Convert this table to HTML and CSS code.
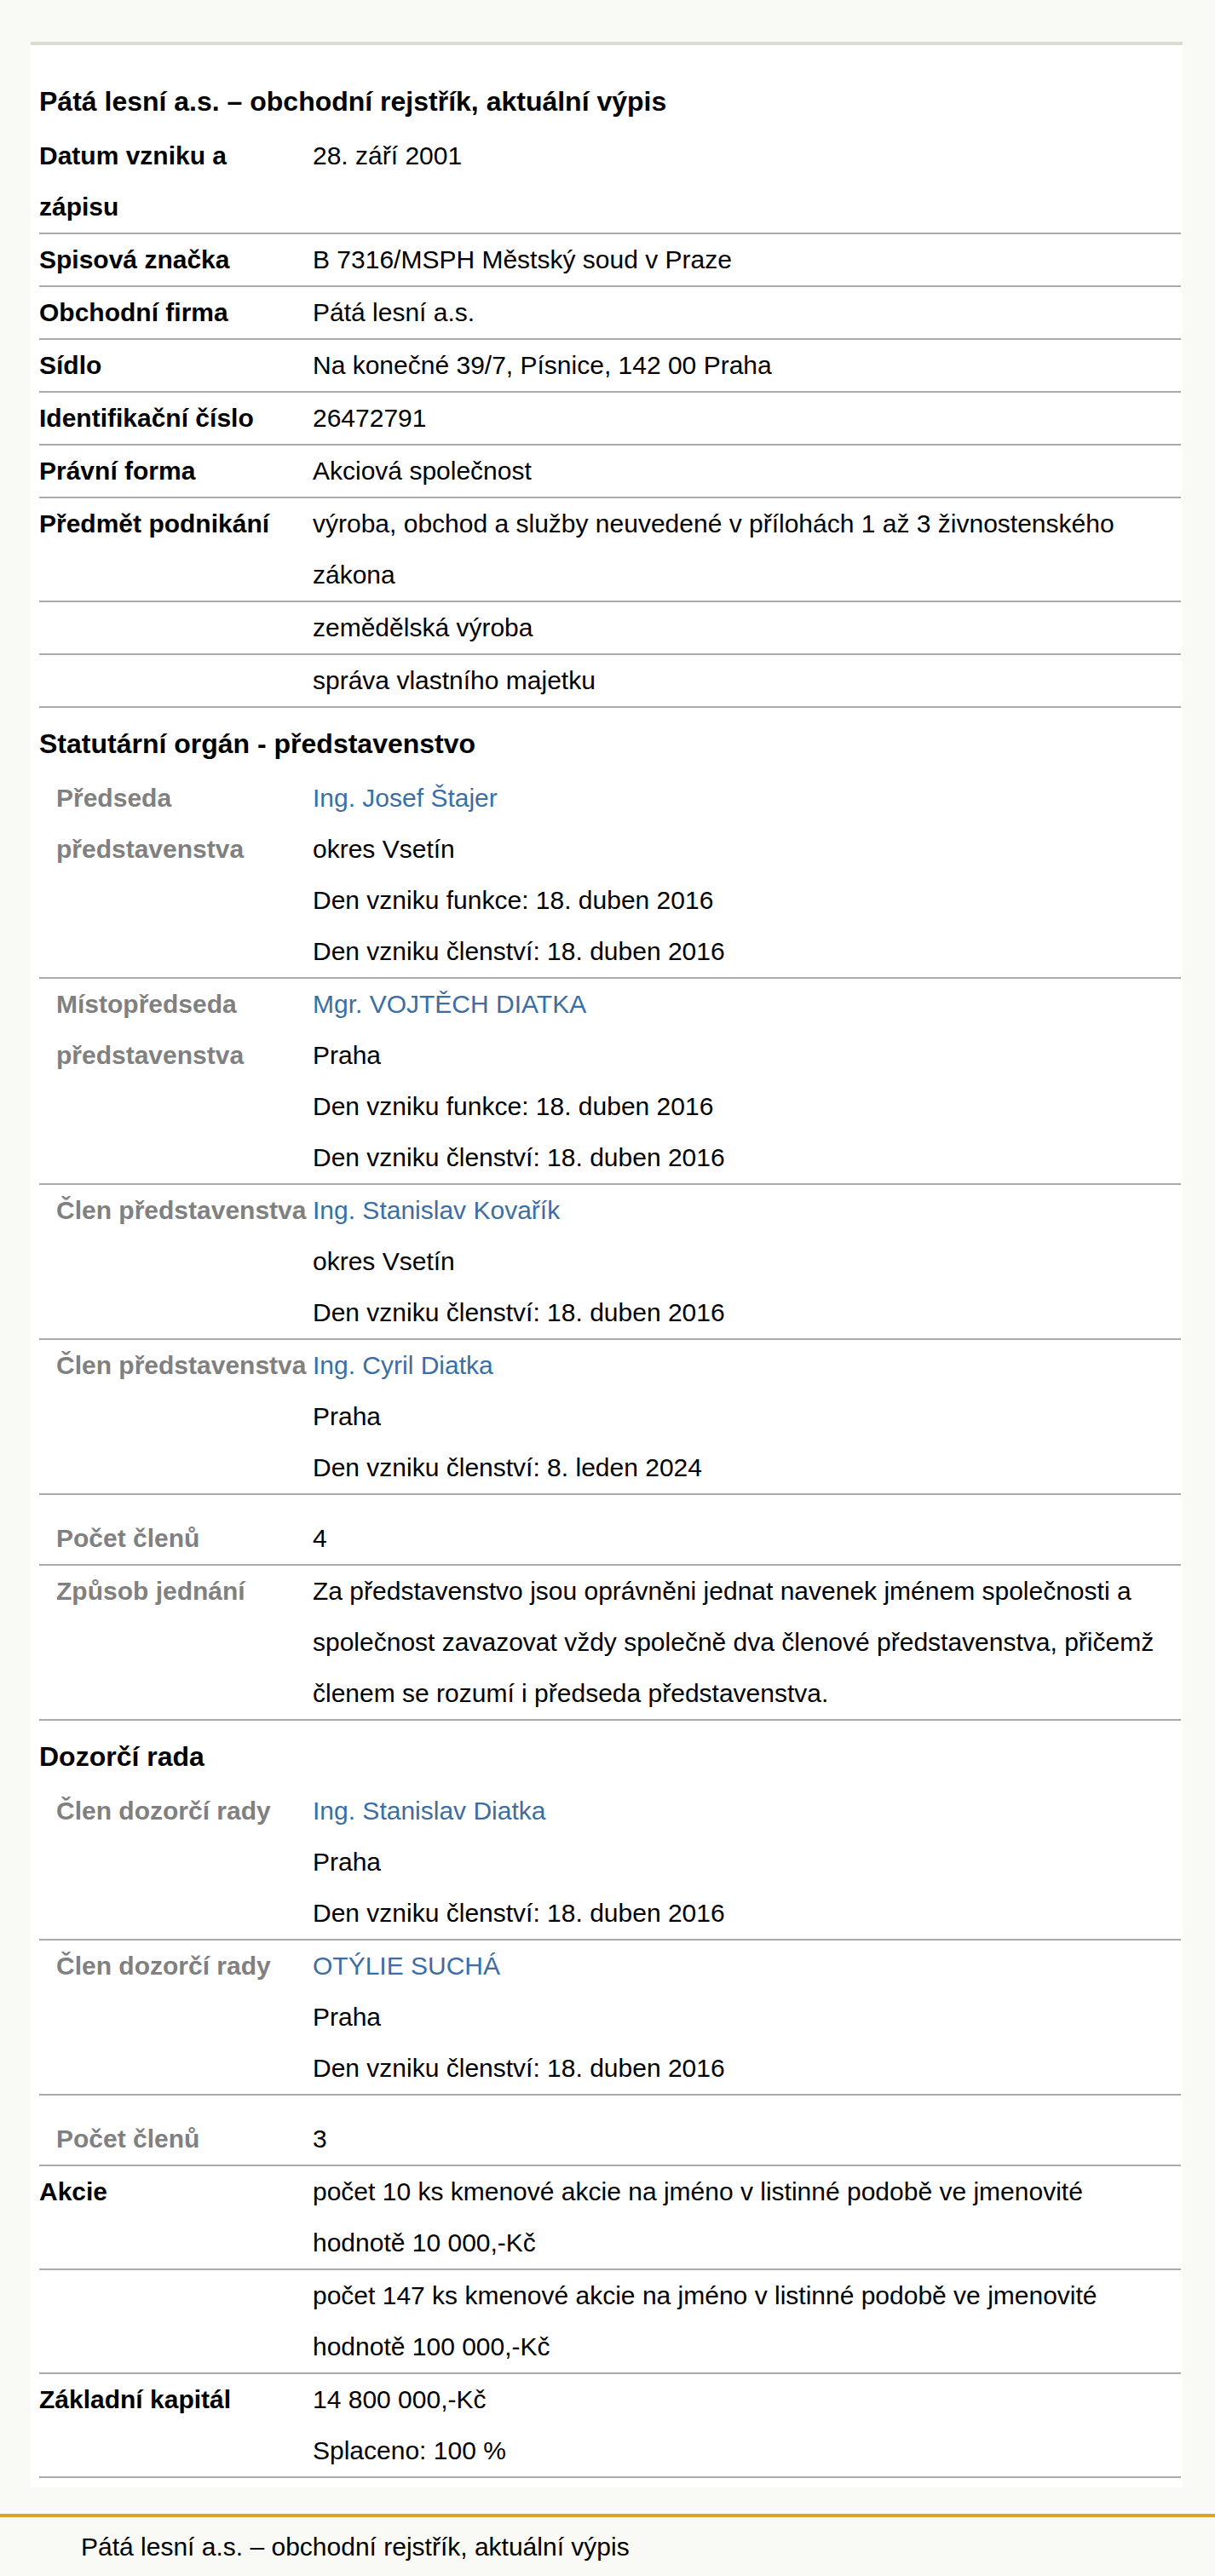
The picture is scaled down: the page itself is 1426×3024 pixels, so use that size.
FILE: index.html
```html
<!DOCTYPE html>
<html lang="cs">
<head>
  <meta charset="UTF-8" />
  <title>Pátá lesní a.s. – obchodní rejstřík, aktuální výpis</title>
  <meta name="viewport" content="width=device-width, initial-scale=1.0" />
  <link rel="stylesheet" href="styles.css">
</head>
<body>

  <div class="card">
    <h1 class="section-title">Pátá lesní a.s. – obchodní rejstřík, aktuální výpis</h1>

    <div class="row">
      <div class="label">Datum vzniku a zápisu</div>
      <div class="value">28. září 2001</div>
    </div>
    <div class="row">
      <div class="label">Spisová značka</div>
      <div class="value">B 7316/MSPH Městský soud v Praze</div>
    </div>
    <div class="row">
      <div class="label">Obchodní firma</div>
      <div class="value">Pátá lesní a.s.</div>
    </div>
    <div class="row">
      <div class="label">Sídlo</div>
      <div class="value">Na konečné 39/7, Písnice, 142 00 Praha</div>
    </div>
    <div class="row">
      <div class="label">Identifikační číslo</div>
      <div class="value">26472791</div>
    </div>
    <div class="row">
      <div class="label">Právní forma</div>
      <div class="value">Akciová společnost</div>
    </div>
    <div class="row">
      <div class="label">Předmět podnikání</div>
      <div class="value">výroba, obchod a služby neuvedené v přílohách 1 až 3 živnostenského zákona</div>
    </div>
    <div class="row">
      <div class="label"></div>
      <div class="value">zemědělská výroba</div>
    </div>
    <div class="row">
      <div class="label"></div>
      <div class="value">správa vlastního majetku</div>
    </div>

    <h2 class="section-title">Statutární orgán - představenstvo</h2>

    <div class="row">
      <div class="label sub">Předseda představenstva</div>
      <div class="value">
        <a href="#">Ing. Josef Štajer</a>
        <div>okres Vsetín</div>
        <div>Den vzniku funkce: 18. duben 2016</div>
        <div>Den vzniku členství: 18. duben 2016</div>
      </div>
    </div>
    <div class="row">
      <div class="label sub">Místopředseda představenstva</div>
      <div class="value">
        <a href="#">Mgr. VOJTĚCH DIATKA</a>
        <div>Praha</div>
        <div>Den vzniku funkce: 18. duben 2016</div>
        <div>Den vzniku členství: 18. duben 2016</div>
      </div>
    </div>
    <div class="row">
      <div class="label sub">Člen představenstva</div>
      <div class="value">
        <a href="#">Ing. Stanislav Kovařík</a>
        <div>okres Vsetín</div>
        <div>Den vzniku členství: 18. duben 2016</div>
      </div>
    </div>
    <div class="row">
      <div class="label sub">Člen představenstva</div>
      <div class="value">
        <a href="#">Ing. Cyril Diatka</a>
        <div>Praha</div>
        <div>Den vzniku členství: 8. leden 2024</div>
      </div>
    </div>
    <div class="row summary">
      <div class="label sub">Počet členů</div>
      <div class="value">4</div>
    </div>
    <div class="row">
      <div class="label sub">Způsob jednání</div>
      <div class="value">Za představenstvo jsou oprávněni jednat navenek jménem společnosti a společnost zavazovat vždy společně dva členové představenstva, přičemž členem se rozumí i předseda představenstva.</div>
    </div>

    <h2 class="section-title">Dozorčí rada</h2>

    <div class="row">
      <div class="label sub">Člen dozorčí rady</div>
      <div class="value">
        <a href="#">Ing. Stanislav Diatka</a>
        <div>Praha</div>
        <div>Den vzniku členství: 18. duben 2016</div>
      </div>
    </div>
    <div class="row">
      <div class="label sub">Člen dozorčí rady</div>
      <div class="value">
        <a href="#">OTÝLIE SUCHÁ</a>
        <div>Praha</div>
        <div>Den vzniku členství: 18. duben 2016</div>
      </div>
    </div>
    <div class="row summary">
      <div class="label sub">Počet členů</div>
      <div class="value">3</div>
    </div>

    <div class="row">
      <div class="label">Akcie</div>
      <div class="value">počet 10 ks kmenové akcie na jméno v listinné podobě ve jmenovité hodnotě 10 000,-Kč</div>
    </div>
    <div class="row">
      <div class="label"></div>
      <div class="value">počet 147 ks kmenové akcie na jméno v listinné podobě ve jmenovité hodnotě 100 000,-Kč</div>
    </div>
    <div class="row">
      <div class="label">Základní kapitál</div>
      <div class="value">
        <div>14 800 000,-Kč</div>
        <div>Splaceno: 100 %</div>
      </div>
    </div>
  </div>

  <footer class="footer">Pátá lesní a.s. – obchodní rejstřík, aktuální výpis</footer>

</body>
</html>
```

FILE: styles.css
```css
body {
  margin: 0;
  padding: 0;
  background: #f9faf5;
  color: #000;
  font-family: "Liberation Sans", Arial, sans-serif;
  font-size: 30px;
  line-height: 60px;
}

.card {
  margin: 49px 38px 0 36px;
  padding: 24px 2px 11px 10px;
  background: #fff;
  border-top: 4px solid #dcdcd0;
}

.section-title {
  margin: 0;
  padding: 10px 0 2px;
  font-size: 32px;
  line-height: 64px;
  font-weight: bold;
}

.row {
  display: grid;
  grid-template-columns: 321px 1fr;
  border-bottom: 2px solid #aaa;
}

.row.summary {
  padding-top: 21px;
}

.label {
  font-weight: bold;
  padding-right: 10px;
}

.label.sub {
  padding-left: 20px;
  padding-right: 0;
  color: #808080;
}

.value a {
  display: block;
  color: #3a6ea5;
  text-decoration: none;
}

.footer {
  margin-top: 31px;
  border-top: 4px solid #daa520;
  padding: 5px 0 20px 95px;
}
```
